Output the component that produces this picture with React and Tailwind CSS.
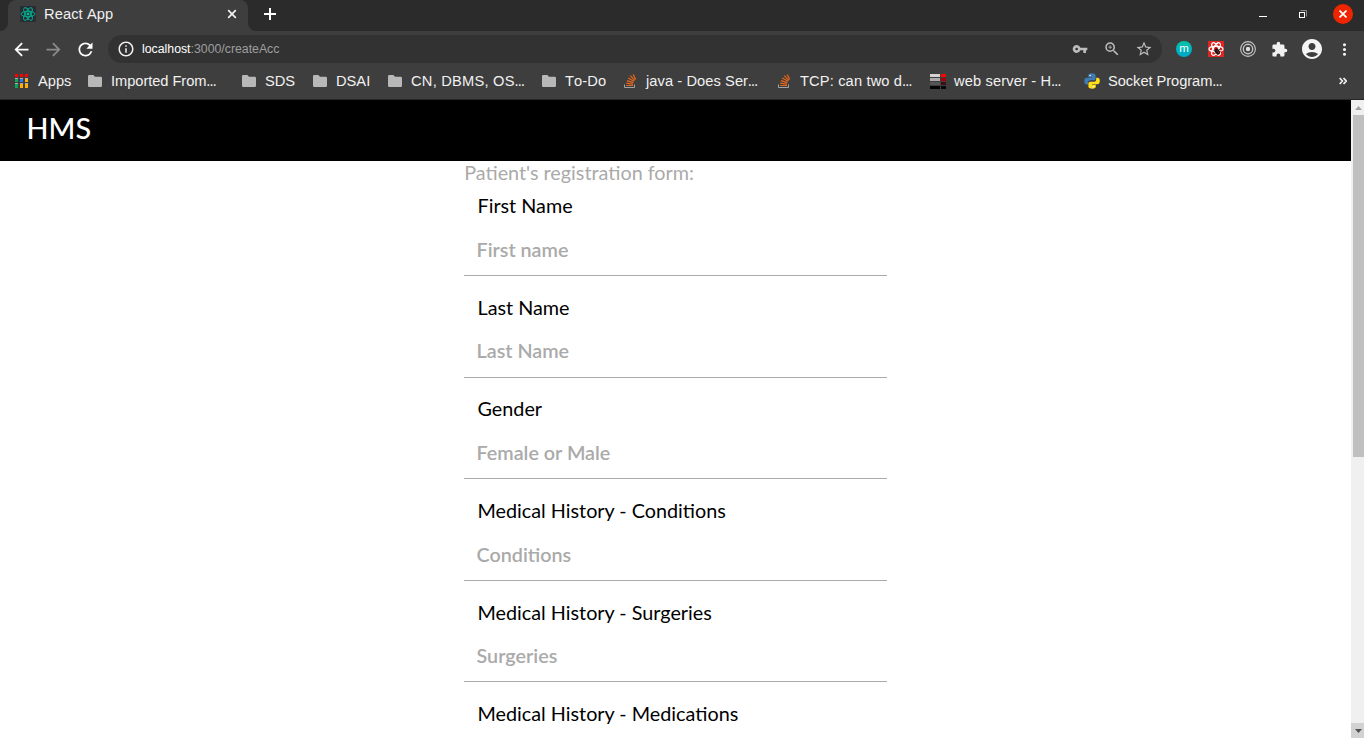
import React from "react";
import {
  MdArrowBack, MdArrowForward, MdRefresh, MdInfoOutline, MdVpnKey, MdZoomIn,
  MdStarBorder, MdExtension, MdAccountCircle, MdMoreVert,
} from "react-icons/md";

function AtomOrbits({ stroke, width }) {
  return (
    <g fill="none" stroke={stroke} strokeWidth={width}>
      <ellipse cx="8" cy="8" rx="7" ry="2.7" />
      <ellipse cx="8" cy="8" rx="7" ry="2.7" transform="rotate(60 8 8)" />
      <ellipse cx="8" cy="8" rx="7" ry="2.7" transform="rotate(120 8 8)" />
    </g>
  );
}

function ReactFavicon() {
  return (
    <svg className="h-4 w-4 shrink-0" viewBox="0 0 16 16">
      <rect width="16" height="16" fill="#282c34" />
      <AtomOrbits stroke="#00b894" width="0.9" />
      <circle cx="8" cy="8" r="1.4" fill="#00b894" />
    </svg>
  );
}

function AppsIcon() {
  const colors = ["#ff0000", "#ff0000", "#ff0000", "#0aa858", "#2979ff", "#ffb000", "#0aa858", "#ffb000", "#ffb000"];
  return (
    <svg className="h-[14px] w-[13px]" viewBox="0 0 13 14">
      {[0, 5, 10].map((x) => (
        <g key={x} fill="#b0a8a8">
          <rect x={x} y="4" width="3" height="1" />
          <rect x={x} y="9" width="3" height="1" />
        </g>
      ))}
      {colors.map((c, i) => (
        <rect key={i} x={(i % 3) * 5} y={i < 3 ? 0 : i < 6 ? 5 : 10} width="3" height={i < 6 ? 3 : 4} fill={c} />
      ))}
    </svg>
  );
}

function FolderIcon() {
  return (
    <svg className="h-3 w-[14px]" viewBox="0 0 14 12">
      <path d="M1.2 0H5.4L7 1.7H12.8Q14 1.7 14 2.9V10.8Q14 12 12.8 12H1.2Q0 12 0 10.8V1.2Q0 0 1.2 0Z" fill="#b8b8b8" />
    </svg>
  );
}

function StackIcon() {
  return (
    <svg className="mt-px h-[15px] w-3" viewBox="0 0 12 15">
      <path d="M.5 10.5V13.5H10.5V10.5" fill="none" stroke="#a0a4a8" />
      <path d="M2.2 11.5H9M2.3 9.2L9.1 10.2M2.9 6.6L9.4 8.6M4.2 3.9L10 7.3M6.3 1.6L10.8 6.3M9.2.5L11.6 5.4" stroke="#e8661b" strokeWidth="1.2" fill="none" />
    </svg>
  );
}

function ServerIcon() {
  const left = ["#d4d4d4", "#aaaaaa", "#555555", "#050505"];
  const right = ["#ff0000", "#a8000a", "#3c1014", "#080808"];
  return (
    <svg className="h-4 w-4" viewBox="0 0 16 16">
      {left.map((c, i) => (
        <g key={c}>
          <rect x="0" y={i * 4 + 1} width="10" height="3" fill={c} />
          <rect x="11" y={i * 4 + 1} width="5" height="3" fill={right[i]} />
        </g>
      ))}
    </svg>
  );
}

function PythonIcon() {
  return (
    <svg className="h-4 w-4" viewBox="0 0 16 16">
      <path d="M7.8.3C5.3.3 4.3 1.1 4.3 2.6V4.2H8.2V4.8H2.7C1.1 4.8.3 6 .3 8C.3 10.1 1.1 11.4 2.6 11.4H4V9.6C4 8.3 5.1 7.3 6.4 7.3H9.8C10.9 7.3 11.6 6.5 11.6 5.5V2.6C11.6 1.1 10.3.3 7.8.3Z" fill="#3f7cb4" />
      <path d="M8.3 15.7C10.8 15.7 11.8 14.9 11.8 13.5V11.8H7.9V11.3H13.3C15 11.3 15.8 10 15.8 8C15.8 5.8 15 4.7 13.5 4.7H12.2V6.4C12.2 7.8 11.1 8.7 9.8 8.7H6.3C5.2 8.7 4.4 9.5 4.4 10.6V13.5C4.4 14.9 5.8 15.7 8.3 15.7Z" fill="#ffdf1b" />
      <circle cx="6.2" cy="2.4" r=".75" fill="#fff" />
      <circle cx="9.9" cy="13.6" r=".75" fill="#fff" />
    </svg>
  );
}

function BugAtomIcon() {
  return (
    <svg className="h-4 w-4" viewBox="0 0 16 16">
      <rect width="16" height="16" fill="#e02420" />
      <AtomOrbits stroke="#ffffff" width="1.2" />
      <ellipse cx="9.3" cy="10.5" rx="2.3" ry="3.2" fill="#1c1414" transform="rotate(-35 9.3 10.5)" />
      <path d="M5.5 9.5L13.5 11M6.5 13L12.5 7.5M9.5 14.3L8 6.5" stroke="#1c1414" strokeWidth=".7" />
      <path d="M9.2 9.2L10.8 12" stroke="#e02420" strokeWidth=".7" />
    </svg>
  );
}

function TargetIcon() {
  return (
    <svg className="h-4 w-4" viewBox="0 0 16 16" fill="none" stroke="#c4c4c4">
      <circle cx="8" cy="8" r="7.4" strokeWidth="1.1" />
      <circle cx="8" cy="8" r="4.7" strokeWidth="1.4" />
      <circle cx="8" cy="8" r="2.2" fill="#dddddd" stroke="none" />
    </svg>
  );
}

const bookmarks = [
  { label: "Apps", Icon: AppsIcon, item: "w-[73px]", icon: "w-[23px]" },
  { label: "Imported From", cut: true, Icon: FolderIcon, item: "w-[154px] tracking-[-0.05px]", icon: "w-[23px]" },
  { label: "SDS", Icon: FolderIcon, item: "w-[71px]", icon: "w-[23px]" },
  { label: "DSAI", Icon: FolderIcon, item: "w-[75px]", icon: "w-[23px]" },
  { label: "CN, DBMS, OS", cut: true, Icon: FolderIcon, item: "w-[154px] tracking-[0.23px]", icon: "w-[23px]" },
  { label: "To-Do", Icon: FolderIcon, item: "w-[82px] tracking-[0.1px]", icon: "w-[23px]" },
  { label: "java - Does Ser", cut: true, Icon: StackIcon, item: "w-[154px] tracking-[0.07px]", icon: "w-[22px]" },
  { label: "TCP: can two d", cut: true, Icon: StackIcon, item: "w-[152px] tracking-[0.14px]", icon: "w-[22px]" },
  { label: "web server - H", cut: true, Icon: ServerIcon, item: "w-[154px] tracking-[0.14px]", icon: "w-[24px]" },
  { label: "Socket Program", cut: true, Icon: PythonIcon, item: "w-[160px] tracking-[-0.05px]", icon: "w-[24px]" },
];

const fields = [
  { label: "First Name", placeholder: "First name" },
  { label: "Last Name", placeholder: "Last Name" },
  { label: "Gender", placeholder: "Female or Male" },
  { label: "Medical History - Conditions", placeholder: "Conditions" },
  { label: "Medical History - Surgeries", placeholder: "Surgeries" },
  { label: "Medical History - Medications", placeholder: "Medications" },
];

function TabStrip() {
  return (
    <div className="flex h-[31px] bg-[#2b2b2b]">
      <div className="flex w-2 items-end bg-[#3e3e3e]">
        <div className="h-full w-full rounded-br-lg bg-[#2b2b2b]" />
      </div>
      <div className="flex w-[240px] items-center rounded-t-lg bg-[#3e3e3e] pb-[3px] pl-3 pr-[10px]">
        <ReactFavicon />
        <span className="ml-2 flex-1 text-[14.67px] tracking-[0.1px]">React App</span>
        <svg className="h-3 w-3" viewBox="0 0 12 12" stroke="#f1f1f1" strokeWidth="1.7">
          <path d="M2.2 2.2L9.8 9.8M9.8 2.2L2.2 9.8" />
        </svg>
      </div>
      <div className="flex w-2 items-end bg-[#3e3e3e]">
        <div className="h-full w-full rounded-bl-lg bg-[#2b2b2b]" />
      </div>
      <div className="flex flex-1 items-center pb-[3px] pl-[7px]">
        <svg className="h-[14px] w-[14px]" viewBox="0 0 14 14" stroke="#ffffff" strokeWidth="2">
          <path d="M7 1V13M1 7H13" />
        </svg>
      </div>
      <div className="flex items-center gap-[31px] pb-[3px] pr-[11px]">
        <svg className="h-[9px] w-2" viewBox="0 0 8 9"><rect y="6" width="8" height="1" fill="#fff" /></svg>
        <svg className="h-[9px] w-[9px]" viewBox="0 0 9 9" fill="none">
          <path d="M2.5 .5H8.5V6.5" stroke="#8a8a8a" />
          <rect x="1.5" y="2.5" width="5" height="5" stroke="#fff" />
        </svg>
        <div className="-ml-[5px] flex h-5 w-5 items-center justify-center rounded-full bg-[#ee2500]">
          <svg className="h-2 w-2" viewBox="0 0 8 8" stroke="#fff" strokeWidth="1.7"><path d="M.5.5L7.5 7.5M7.5.5L.5 7.5" /></svg>
        </div>
      </div>
    </div>
  );
}

function Toolbar() {
  return (
    <div className="flex h-9 items-center">
      <div className="flex w-[108px] items-center gap-[11px] pl-[11px] text-[21px]">
        <MdArrowBack className="text-white" />
        <MdArrowForward className="text-[#8b8b8b]" />
        <MdRefresh className="text-white" />
      </div>
      <div className="flex h-7 w-[1054px] items-center rounded-full bg-[#323232] pl-[9px] pr-[9px]">
        <MdInfoOutline className="text-[18px]" />
        <span className="ml-[7px] flex-1 text-[12.3px] text-[#9e9e9e]">
          <span className="text-white">localhost</span>:3000/createAcc
        </span>
        <div className="flex items-center text-[#bdbdbd]">
          <MdVpnKey className="text-[16px]" />
          <MdZoomIn className="ml-[15px] text-[18px]" />
          <MdStarBorder className="ml-[14px] text-[18px]" />
        </div>
      </div>
      <div className="ml-[14px] flex flex-1 items-center">
        <div className="flex h-4 w-4 items-center justify-center rounded-full bg-linear-to-b from-[#00c4a4] to-[#00a5cc] text-[11.5px] leading-4 text-white">
          <span className="-mt-[2px]">m</span>
        </div>
        <div className="ml-4"><BugAtomIcon /></div>
        <div className="ml-4"><TargetIcon /></div>
        <MdExtension className="ml-[15px] text-[17px] text-[#f1f1f1]" />
        <MdAccountCircle className="ml-3 text-[24px] text-[#f5f5f5]" />
        <MdMoreVert className="ml-[11px] text-[19px]" />
      </div>
    </div>
  );
}

function BookmarksBar() {
  return (
    <div className="flex h-[33px] items-center border-b border-[#262626] pb-[5px] pl-[15px] text-[14.67px]">
      {bookmarks.map(({ label, cut, Icon, item, icon }) => (
        <div key={label} className={`flex shrink-0 items-center whitespace-nowrap ${item}`}>
          <span className={`shrink-0 ${icon}`}><Icon /></span>
          <span>{label}{cut && <span className="text-[10px] font-bold">…</span>}</span>
        </div>
      ))}
      <svg className="ml-[95px] h-2 w-2" viewBox="0 0 8 8" fill="none" stroke="#f1f1f1" strokeWidth="1.7">
        <path d="M.7 1L3.4 4L.7 7M4.5 1L7.2 4L4.5 7" />
      </svg>
    </div>
  );
}

function Scrollbar() {
  return (
    <div className="flex w-[13px] flex-col bg-[#f0f0f0]">
      <div className="flex h-[15px] items-center justify-center pl-[2px]">
        <svg className="h-1 w-[7px]" viewBox="0 0 7 4"><path d="M0 4L3.5 0L7 4Z" fill="#a0a0a0" /></svg>
      </div>
      <div className="ml-[2px] h-[342px] bg-[#c0c0c0]" />
      <div className="mt-auto flex h-[15px] items-center justify-center bg-[#d2d2d2] pl-[2px]">
        <svg className="h-1 w-[7px]" viewBox="0 0 7 4"><path d="M0 0L3.5 4L7 0Z" fill="#505050" /></svg>
      </div>
    </div>
  );
}

export default function App() {
  return (
    <div className="flex h-[738px] w-[1364px] flex-col overflow-hidden bg-white">
      <div className="h-[100px] shrink-0 bg-[#3e3e3e] font-['Liberation_Sans',sans-serif] text-[#f1f1f1] [font-kerning:none]">
        <TabStrip />
        <Toolbar />
        <BookmarksBar />
      </div>
      <div className="flex min-h-0 flex-1">
        <div className="flex-1 overflow-hidden font-['Lato',sans-serif]">
          <header className="flex h-[61px] items-center bg-black pb-[3.5px] pl-[26.5px] text-[28.8px] font-medium text-white">HMS</header>
          <form className="mx-auto w-[423px]">
            <h1 className="h-[27px] pl-[0.2px] text-[19.8px] leading-[23px] text-[#aaaaaa]">Patient's registration form:</h1>
            {fields.map(({ label, placeholder }) => (
              <div key={label} className="mb-[13.6px] flex h-[88px] flex-col border-b border-[#aaaaaa]">
                <label className="h-[35.85px] pl-[13.5px] pt-[0.2px] text-[19.8px] leading-[34px] text-black">{label}</label>
                <input
                  className="h-[51px] w-full bg-transparent pl-[12.5px] text-[19.75px] font-semibold outline-none placeholder:text-[#aaaaaa]"
                  placeholder={placeholder}
                />
              </div>
            ))}
          </form>
        </div>
        <Scrollbar />
      </div>
    </div>
  );
}
